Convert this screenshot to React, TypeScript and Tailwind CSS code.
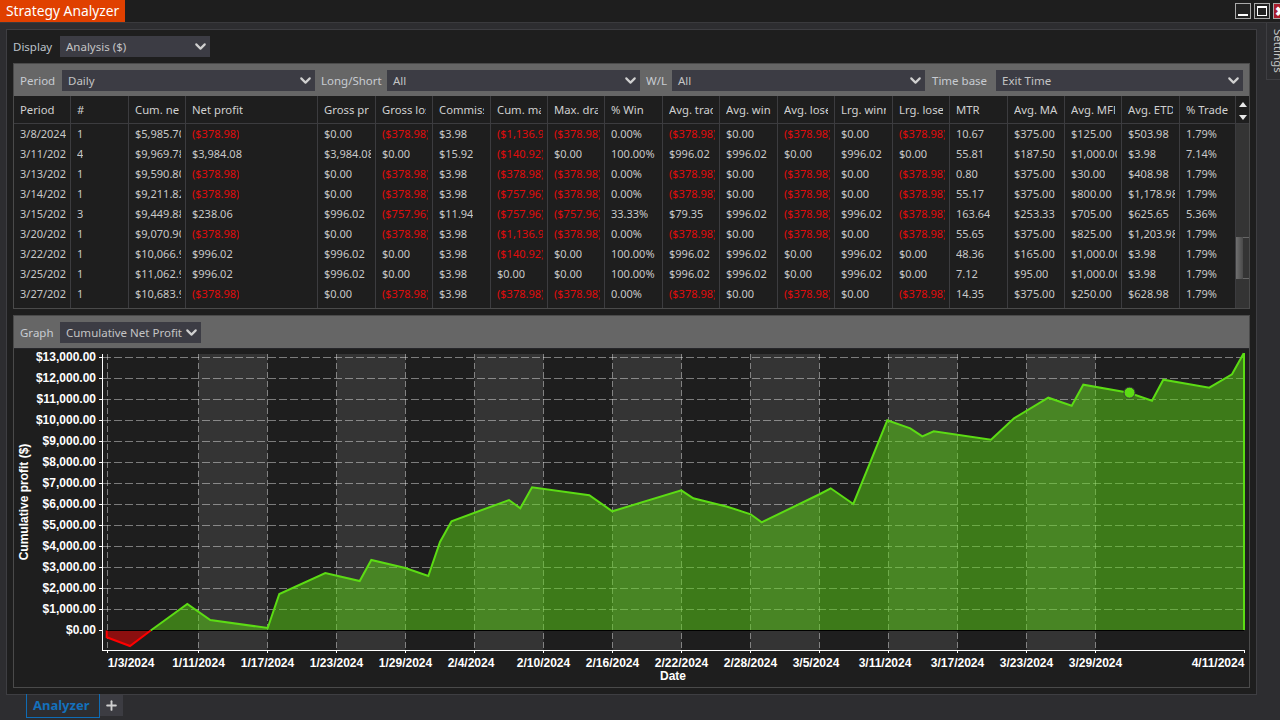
import React from "react";
import { ChevronDown, Plus } from "lucide-react";

const GRID =
  "grid grid-cols-[57px_58px_57px_132px_58px_57px_58px_57px_57px_58px_57px_58px_57px_58px_57px_58px_57px_57px_58px_56px]";

const headers = ["Period", "#", "Cum. net profit", "Net profit", "Gross profit", "Gross loss", "Commission", "Cum. max", "Max. drawdown", "% Win", "Avg. trade", "Avg. winner", "Avg. loser", "Lrg. winner", "Lrg. loser", "MTR", "Avg. MAE", "Avg. MFE", "Avg. ETD", "% Trade"];

const L = "($378.98)";
const rows = [
  ["3/8/2024", "1", "$5,985.70", L, "$0.00", L, "$3.98", "($1,136.94)", L, "0.00%", L, "$0.00", L, "$0.00", L, "10.67", "$375.00", "$125.00", "$503.98", "1.79%"],
  ["3/11/2024", "4", "$9,969.78", "$3,984.08", "$3,984.08", "$0.00", "$15.92", "($140.92)", "$0.00", "100.00%", "$996.02", "$996.02", "$0.00", "$996.02", "$0.00", "55.81", "$187.50", "$1,000.00", "$3.98", "7.14%"],
  ["3/13/2024", "1", "$9,590.80", L, "$0.00", L, "$3.98", L, L, "0.00%", L, "$0.00", L, "$0.00", L, "0.80", "$375.00", "$30.00", "$408.98", "1.79%"],
  ["3/14/2024", "1", "$9,211.82", L, "$0.00", L, "$3.98", "($757.96)", L, "0.00%", L, "$0.00", L, "$0.00", L, "55.17", "$375.00", "$800.00", "$1,178.98", "1.79%"],
  ["3/15/2024", "3", "$9,449.88", "$238.06", "$996.02", "($757.96)", "$11.94", "($757.96)", "($757.96)", "33.33%", "$79.35", "$996.02", L, "$996.02", L, "163.64", "$253.33", "$705.00", "$625.65", "5.36%"],
  ["3/20/2024", "1", "$9,070.90", L, "$0.00", L, "$3.98", "($1,136.94)", L, "0.00%", L, "$0.00", L, "$0.00", L, "55.65", "$375.00", "$825.00", "$1,203.98", "1.79%"],
  ["3/22/2024", "1", "$10,066.92", "$996.02", "$996.02", "$0.00", "$3.98", "($140.92)", "$0.00", "100.00%", "$996.02", "$996.02", "$0.00", "$996.02", "$0.00", "48.36", "$165.00", "$1,000.00", "$3.98", "1.79%"],
  ["3/25/2024", "1", "$11,062.94", "$996.02", "$996.02", "$0.00", "$3.98", "$0.00", "$0.00", "100.00%", "$996.02", "$996.02", "$0.00", "$996.02", "$0.00", "7.12", "$95.00", "$1,000.00", "$3.98", "1.79%"],
  ["3/27/2024", "1", "$10,683.96", L, "$0.00", L, "$3.98", L, L, "0.00%", L, "$0.00", L, "$0.00", L, "14.35", "$375.00", "$250.00", "$628.98", "1.79%"],
];

const pts: [number, number][] = [
  [150.7, 630.5], [187.3, 604], [210.3, 620], [267.7, 628], [279.3, 594], [325.3, 573], [359.7, 581], [371.3, 560], [405.3, 568], [428.3, 576], [440, 542], [451.5, 521.2], [509, 500], [520.3, 508.3], [532, 487.3], [589.3, 495.3], [612.3, 511.3], [681.3, 490.3], [693.3, 498.3], [727.3, 506.7], [750.7, 514.3], [761.7, 522.3], [820, 494], [830.7, 488.3], [853.3, 504], [887.3, 420.3], [910.3, 428.3], [922.3, 436.3], [933.7, 431.3], [991, 439.7], [1014, 418.3], [1048.3, 397.7], [1071.7, 405.7], [1083.3, 384.7], [1129, 392.7], [1152, 400.7], [1163.3, 379.7], [1209.3, 387.7], [1232, 374.3], [1243.7, 353.3],
];
const line = pts.map((p) => p.join(",")).join(" ");

const yLabels = ["$13,000.00", "$12,000.00", "$11,000.00", "$10,000.00", "$9,000.00", "$8,000.00", "$7,000.00", "$6,000.00", "$5,000.00", "$4,000.00", "$3,000.00", "$2,000.00", "$1,000.00", "$0.00"];
const xGrid = [107.5, 198.5, 267.5, 336.5, 405.5, 474.5, 543.5, 612.5, 681.5, 750.5, 819.5, 888.5, 957.5, 1026.5, 1095.5];
const bands = [198.5, 336.5, 474.5, 612.5, 750.5, 888.5, 1026.5];
const xLabels: [number, string][] = [[131, "1/3/2024"], [198.5, "1/11/2024"], [267.5, "1/17/2024"], [336.5, "1/23/2024"], [405.5, "1/29/2024"], [471, "2/4/2024"], [543.5, "2/10/2024"], [612.5, "2/16/2024"], [681.5, "2/22/2024"], [750.5, "2/28/2024"], [816, "3/5/2024"], [885, "3/11/2024"], [957.5, "3/17/2024"], [1026.5, "3/23/2024"], [1095.5, "3/29/2024"], [1218, "4/11/2024"]];

function Select({ label, cls }: { label: string; cls: string }) {
  return (
    <div className={`flex h-[21px] items-center justify-between bg-[#3c3c44] pl-[6px] pr-[1px] text-[#c4c4c4] ${cls}`}>
      <span className="whitespace-nowrap pt-[1px]">{label}</span>
      <ChevronDown size={17} strokeWidth={3} className="shrink-0 text-[#d0d0d0]" />
    </div>
  );
}

function Chart() {
  return (
    <svg viewBox="14 349 1235 338" width={1235} height={338} className="block font-['Liberation_Sans',Arial,sans-serif] text-[12px] font-bold">
      {bands.map((x) => (
        <rect key={x} x={x} y={354} width={69} height={296} fill="#343434" />
      ))}
      {yLabels.map((_, i) => (
        <line key={i} x1={103} x2={1244} y1={357.5 + i * 21} y2={357.5 + i * 21} stroke="#ffffff" strokeOpacity={i === 13 ? 0 : 0.42} strokeDasharray="8 3" />
      ))}
      {xGrid.map((x) => (
        <line key={x} x1={x} x2={x} y1={354} y2={650} stroke="#ffffff" strokeOpacity={0.42} strokeDasharray="6 3" />
      ))}
      <polygon points={`${line} 1243.7,630.5`} fill="#5cd614" fillOpacity={0.5} />
      <polygon points="106.7,630.5 106.7,637.3 130,646 150.7,630.5" fill="#8c0f0f" />
      <line x1={106} x2={1244} y1={630.5} y2={630.5} stroke="#000000" />
      <polyline points="106.7,630.5 106.7,637.3 130,646 150.7,630.5" fill="none" stroke="#ff0000" strokeWidth={2} />
      <polyline points={line} fill="none" stroke="#5cdc14" strokeWidth={2} />
      <line x1={1244} x2={1244} y1={353} y2={630} stroke="#5cdc14" strokeWidth={2} />
      <circle cx={1129.5} cy={392.7} r={5.5} fill="#5cdc14" stroke="#3a3a3a" />
      <line x1={102.5} x2={102.5} y1={354} y2={650.5} stroke="#ffffff" />
      <line x1={102} x2={1244.5} y1={650.5} y2={650.5} stroke="#ffffff" />
      {yLabels.map((t, i) => (
        <g key={t}>
          <line x1={99} x2={102} y1={357.5 + i * 21} y2={357.5 + i * 21} stroke="#ffffff" />
          <text x={96} y={360.8 + i * 21} textAnchor="end" fill="#ffffff">{t}</text>
        </g>
      ))}
      {[...xGrid, 1244.5].map((x) => (
        <line key={x} x1={x} x2={x} y1={650} y2={653} stroke="#ffffff" />
      ))}
      {xLabels.map(([x, t]) => (
        <text key={t} x={x} y={666.5} textAnchor="middle" fill="#ffffff">{t}</text>
      ))}
      <text x={673} y={680} textAnchor="middle" fill="#ffffff">Date</text>
      <text transform="translate(28 502) rotate(-90)" textAnchor="middle" fill="#ffffff">Cumulative profit ($)</text>
    </svg>
  );
}

export default function App() {
  return (
    <div className="flex h-[720px] w-[1280px] flex-col overflow-hidden bg-[#2d2d30] font-['Noto_Sans',sans-serif] text-[11.5px] text-[#c8c8c8]">
      {/* title bar */}
      <div className="flex h-[23px] shrink-0 items-start justify-between border-b border-[#3a3a3d] bg-[#1e1e1e]">
        <div className="flex h-[22px] w-[125px] items-center whitespace-nowrap bg-[#e04000] pl-[6px] text-[13.8px] text-white">Strategy Analyzer</div>
        <div className="flex shrink-0 gap-[3px] pt-[3px]">
          <div className="flex h-[16px] w-[16px] items-end justify-center border border-[#aaaaaa] bg-[#222222] pb-[2px]"><div className="h-[2px] w-[10px] bg-white" /></div>
          <div className="flex h-[16px] w-[16px] items-center justify-center border border-[#aaaaaa] bg-[#222222]"><div className="h-[10px] w-[10px] border border-t-2 border-white" /></div>
          <div className="flex h-[16px] w-[7px] items-center overflow-hidden border-y border-l border-[#aaaaaa] bg-[#a81c2c] pl-[1px] text-[13px] font-bold leading-none text-white">✖</div>
        </div>
      </div>

      <div className="flex h-[672px] shrink-0">
        {/* main panel */}
        <div className="ml-[6px] mt-[6px] h-[666px] w-[1251px] shrink-0 border border-[#3e3e42] bg-[#1e1e1e] px-[6px] pt-[6px]">
          <div className="flex h-[21px] items-center">
            <span className="w-[47px] text-[#bcc2ca]">Display</span>
            <Select label="Analysis ($)" cls="w-[150px]" />
          </div>

          {/* table box */}
          <div className="mt-[6px] h-[246px] border border-[#4a4a4a]">
            <div className="flex h-[32px] items-center bg-[#666666] pl-[6px] text-[#c8ccd2]">
              <span className="w-[42px] pt-[1px]">Period</span>
              <Select label="Daily" cls="w-[253px]" />
              <span className="w-[72px] pl-[6px] pt-[1px]">Long/Short</span>
              <Select label="All" cls="w-[253px]" />
              <span className="w-[32px] pl-[6px] pt-[1px]">W/L</span>
              <Select label="All" cls="w-[253px]" />
              <span className="w-[71px] pl-[7px] pt-[1px]">Time base</span>
              <Select label="Exit Time" cls="w-[247px]" />
            </div>
            <div className="flex">
              <div className="w-[1222px]">
                <div className={`${GRID} h-[28px] border-b border-[#3c3c3f]`}>
                  {headers.map((h, i) => (
                    <div key={i} className="flex items-center overflow-hidden border-r border-[#3c3c3f] pl-[6px] pr-[6px] pt-[1px]">
                      <span className="overflow-hidden whitespace-nowrap text-[11.3px] text-[#d0d0d0]">{h}</span>
                    </div>
                  ))}
                </div>
                {rows.map((r, ri) => (
                  <div key={ri} className={`${GRID} h-[20px]`}>
                    {r.map((c, i) => (
                      <div key={i} className="flex items-center overflow-hidden border-r border-[#3c3c3f] pl-[6px] pr-[4px]">
                        <span className={`overflow-hidden whitespace-nowrap text-[11px] ${c.startsWith("(") ? "text-[#e00c0c]" : "text-[#c8c8c8]"}`}>{c}</span>
                      </div>
                    ))}
                  </div>
                ))}
                <div className={`${GRID} h-[4px]`}>
                  {headers.map((h) => (
                    <div key={h} className="border-r border-[#3c3c3f]" />
                  ))}
                </div>
              </div>
              {/* scrollbar */}
              <div className="flex w-[13px] flex-col">
                <div className="flex h-[28px] flex-col items-center gap-[8px] border-b border-[#3c3c3f] pt-[6px]">
                  <svg width="8" height="5" viewBox="0 0 8 5"><polygon points="4,0 8,5 0,5" fill="#e8e8e8" /></svg>
                  <svg width="8" height="5" viewBox="0 0 8 5"><polygon points="0,0 8,0 4,5" fill="#e8e8e8" /></svg>
                </div>
                <div className="h-[184px] bg-[#343434] pt-[113px]">
                  <div className="flex h-[42px]">
                    <div className="w-[7px] bg-gradient-to-r from-[#707070] to-[#4a4a4a]" />
                    <div className="w-[6px] border-y border-[#666666]" />
                  </div>
                </div>
              </div>
            </div>
          </div>

          {/* graph box */}
          <div className="mt-[6px] h-[373px] border border-[#4a4a4a]">
            <div className="flex h-[33px] items-center border-b border-[#26262a] bg-[#666666] pl-[6px] pt-[1px] text-[#c8ccd2]">
              <span className="w-[40px]">Graph</span>
              <Select label="Cumulative Net Profit" cls="w-[141px]" />
            </div>
            <Chart />
          </div>
        </div>

        {/* settings tab */}
        <div className="ml-[9px] flex h-[57px] w-[21px] shrink-0 justify-start border-b border-l border-[#3e3e42] pl-[3px] pt-[6px] text-[#c4c4c4] [writing-mode:vertical-rl]">
          Settings
        </div>
      </div>

      {/* bottom tabs */}
      <div className="-mt-[1px] flex items-start pl-[26px]">
        <div className="flex h-[24px] w-[74px] items-center border-x border-b border-[#0f6cb5] pl-[6px] text-[13px] font-bold text-[#1470bb]">Analyzer</div>
        <div className="mt-[1px] flex h-[21px] w-[23px] items-center justify-center bg-[#3c3c42]">
          <Plus size={15} strokeWidth={3} className="text-[#d0d0d0]" />
        </div>
      </div>
    </div>
  );
}
